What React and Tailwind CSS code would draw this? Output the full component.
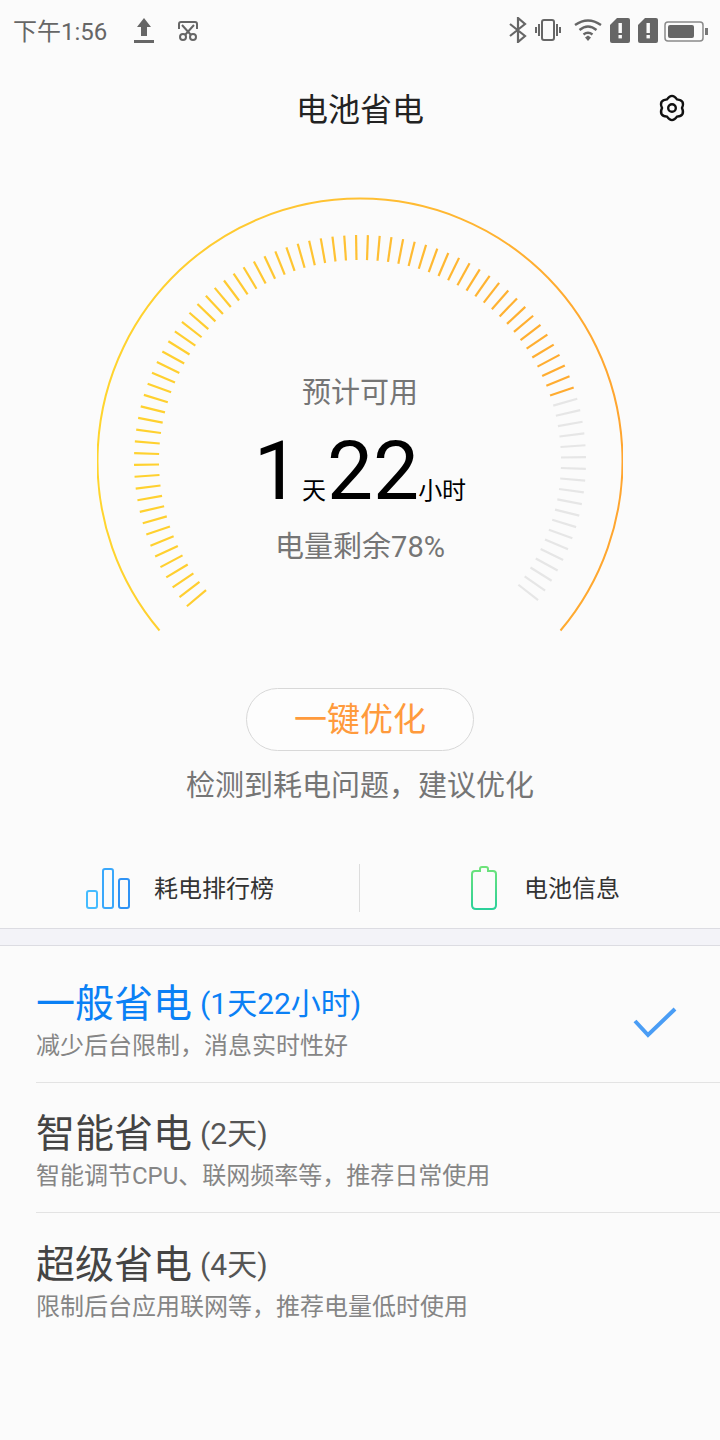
const FONT = "font-['Roboto','Noto_Sans_CJK_SC',sans-serif]";

// one tick every 3 degrees, -130 to 128 from the top of the dial
const TICKS = Array.from({ length: 87 }, (_, i) => {
  const deg = -130 + i * 3;
  const rad = (deg * Math.PI) / 180;
  return {
    deg,
    x1: 263 + 201 * Math.sin(rad),
    y1: 264 - 201 * Math.cos(rad),
    x2: 263 + 226 * Math.sin(rad),
    y2: 264 - 226 * Math.cos(rad),
  };
});

// six soft lobes for the settings gear
const polar = (r, deg) => {
  const rad = (deg * Math.PI) / 180;
  return `${(14 + r * Math.sin(rad)).toFixed(2)} ${(14 - r * Math.cos(rad)).toFixed(2)}`;
};
const GEAR =
  `M${polar(10, -30)} ` +
  [0, 60, 120, 180, 240, 300].map((a) => `Q${polar(15.5, a)} ${polar(10, a + 30)}`).join(' ') +
  ' Z';

function Gauge() {
  return (
    <svg width="526" height="450" viewBox="0 0 526 450" fill="none">
      <defs>
        <linearGradient id="dial" gradientUnits="userSpaceOnUse" x1="0" y1="0" x2="526" y2="0">
          <stop offset="0" stopColor="#ffd52e" />
          <stop offset="0.5" stopColor="#ffc033" />
          <stop offset="1" stopColor="#ffa52f" />
        </linearGradient>
      </defs>
      <path d="M62.5 433.5 A262.5 262.5 0 1 1 463.5 433.5" stroke="url(#dial)" strokeWidth="2" />
      {TICKS.map((t) => (
        <line
          key={t.deg}
          x1={t.x1}
          y1={t.y1}
          x2={t.x2}
          y2={t.y2}
          stroke={t.deg <= 71 ? 'url(#dial)' : '#e6e6e6'}
          strokeWidth="2.2"
        />
      ))}
    </svg>
  );
}

function StatusBar() {
  return (
    <div className="h-[60px] flex items-center pl-[13px] pr-[12px] text-[#666666]">
      <span className="text-[24px] leading-none w-[121px] mt-[3px]">下午1:56</span>
      <svg width="20" height="26" viewBox="0 0 20 26" fill="#666666">
        <path d="M10 1 L17 10 H13 V19 H7 V10 H3 Z" />
        <rect x="0" y="23" width="20" height="3" />
      </svg>
      <svg className="ml-[23px] mt-[2px]" width="22" height="22" viewBox="0 0 22 22" fill="none" stroke="#666666" strokeWidth="2">
        <path d="M2 9 V4 Q2 2 4 2 H18 Q20 2 20 4 V9" />
        <path d="M5 5 L14 15 M17 5 L8 15" />
        <circle cx="6" cy="17" r="3" />
        <circle cx="16" cy="17" r="3" />
      </svg>
      <div className="flex-1" />
      <svg width="20" height="26" viewBox="0 0 20 26" fill="none" stroke="#666666" strokeWidth="2.2">
        <path d="M2 7 L17 19 L10 25 V1 L17 7 L2 19" />
      </svg>
      <svg className="ml-[7px]" width="26" height="24" viewBox="0 0 26 24" fill="none" stroke="#666666" strokeWidth="2">
        <rect x="7" y="2" width="12" height="20" rx="2" />
        <path d="M4 6 V18 M1 9 V15 M22 6 V18 M25 9 V15" />
      </svg>
      <svg className="ml-[13px]" width="28" height="22" viewBox="0 0 28 22" fill="none" stroke="#666666" strokeWidth="2.4">
        <path d="M1 6 Q14 -3 27 6" />
        <path d="M5.5 11 Q14 4 22.5 11" />
        <path d="M9.5 15.5 Q14 12 18.5 15.5" />
        <path d="M11 18.5 L14 16.5 L17 18.5 L14 22 Z" fill="#666666" stroke="none" />
      </svg>
      <SimAlert className="ml-[8px]" />
      <SimAlert className="ml-[8px]" />
      <svg className="ml-[6px] mt-[2px]" width="44" height="21" viewBox="0 0 44 21">
        <rect x="1" y="1" width="38" height="19" rx="3" fill="none" stroke="#8a8a8a" strokeWidth="1.5" />
        <rect x="4" y="4" width="26" height="13" rx="2" fill="#666666" />
        <rect x="41" y="7" width="3" height="7" fill="#777777" />
      </svg>
    </div>
  );
}

function SimAlert({ className }) {
  return (
    <svg className={className} width="20" height="25" viewBox="0 0 20 25">
      <path d="M7 0 H18 Q20 0 20 2 V23 Q20 25 18 25 H2 Q0 25 0 23 V7 Z" fill="#666666" />
      <rect x="8.5" y="5" width="3.4" height="10" fill="#fbfbfb" />
      <rect x="8.5" y="17" width="3.4" height="3.4" fill="#fbfbfb" />
    </svg>
  );
}

function ModeRow({ title, time, desc, active, last }) {
  return (
    <div className={`h-[130px] ml-9 flex items-start ${last ? 'pt-[30px]' : 'pt-[29px] border-b border-[#e3e3e3]'}`}>
      <div className="flex-1">
        <div className="flex items-center h-[44px]">
          <span className={`text-[39px] leading-none ${active ? 'text-[#0a80f5]' : 'text-[#444444]'}`}>{title}</span>
          <span className={`text-[30px] leading-none ml-[8px] ${active ? 'text-[#0a80f5]' : 'text-[#555555]'}`}>{time}</span>
        </div>
        <p className="text-[24px] leading-none mt-[8px] text-[#858585]">{desc}</p>
      </div>
      {active && (
        <svg className="mr-[43px] mt-[24px]" width="44" height="34" viewBox="0 0 44 34" fill="none" stroke="#4a9df5" strokeWidth="4">
          <path d="M2 15 L15 29 L42 3" />
        </svg>
      )}
    </div>
  );
}

export default function App() {
  return (
    <div className={`${FONT} w-[720px] h-[1440px] bg-[#fbfbfb] overflow-hidden`}>
      <StatusBar />

      <div className="h-[100px] relative flex items-center justify-center">
        <h1 className="text-[32px] leading-none text-[#222222]">电池省电</h1>
        <svg className="absolute left-[658px] top-[34px]" width="28" height="28" viewBox="0 0 28 28" fill="none" stroke="#111111" strokeWidth="2.4">
          <path d={GEAR} />
          <circle cx="14" cy="14" r="3.8" />
        </svg>
      </div>

      {/* dial */}
      <div className="relative ml-[97px] mt-[37px] w-[526px] h-[491px]">
        <Gauge />
        <div className="absolute inset-x-0 top-[178px] flex flex-col items-center">
          <span className="text-[29px] leading-[36px] text-[#757575]">预计可用</span>
          <div className="flex items-baseline h-[100px] mt-[10px] text-black">
            <span className="text-[82px] leading-[100px]">1</span>
            <span className="text-[24px] leading-none ml-[2px] mr-[1px]">天</span>
            <span className="text-[82px] leading-[100px]">22</span>
            <span className="text-[24px] leading-none -ml-[1px]">小时</span>
          </div>
          <span className="text-[29px] leading-[36px] mt-[8px] text-[#757575]">电量剩余78%</span>
        </div>
      </div>

      <div className="flex flex-col items-center">
        <button className="w-[228px] h-[63px] rounded-full border border-[#d8d8d8] bg-[#fdfdfd] text-[33px] leading-none text-[#ff9a3c]">
          一键优化
        </button>
        <p className="mt-[15px] text-[29px] leading-[40px] text-[#757575]">检测到耗电问题，建议优化</p>
      </div>

      <div className="mt-[58px] h-[48px] flex items-center">
        <div className="w-[360px] h-full flex items-center pl-[86px] border-r border-[#dddddd]">
          <svg width="44" height="42" viewBox="0 0 44 42" fill="none" strokeWidth="2">
            <rect x="1" y="24" width="10" height="17" rx="2" stroke="#45bcff" />
            <rect x="17" y="2" width="10" height="39" rx="2" stroke="#3aa8fb" />
            <rect x="33" y="12" width="10" height="29" rx="2" stroke="#2f93f5" />
          </svg>
          <span className="ml-[24px] mt-[2px] text-[24px] leading-none text-[#333333]">耗电排行榜</span>
        </div>
        <div className="flex-1 h-full flex items-center pl-[111px]">
          <svg width="26" height="44" viewBox="0 0 26 44" fill="none" strokeWidth="2">
            <defs>
              <linearGradient id="cell" x1="0" y1="0" x2="0" y2="1">
                <stop offset="0" stopColor="#6fe37a" />
                <stop offset="1" stopColor="#2bd09a" />
              </linearGradient>
            </defs>
            <path d="M9 5 V3 Q9 1 11 1 H15 Q17 1 17 3 V5 H22 Q25 5 25 8 V39 Q25 43 21 43 H5 Q1 43 1 39 V8 Q1 5 4 5 Z" stroke="url(#cell)" />
          </svg>
          <span className="ml-[27px] mt-[2px] text-[24px] leading-none text-[#333333]">电池信息</span>
        </div>
      </div>

      <div className="mt-[16px] h-[18px] bg-[#f3f3f8] border-y border-[#dcdce2]" />

      <div className="pt-[7px]">
        <ModeRow title="一般省电" time="(1天22小时)" desc="减少后台限制，消息实时性好" active />
        <ModeRow title="智能省电" time="(2天)" desc="智能调节CPU、联网频率等，推荐日常使用" />
        <ModeRow title="超级省电" time="(4天)" desc="限制后台应用联网等，推荐电量低时使用" last />
      </div>
    </div>
  );
}
